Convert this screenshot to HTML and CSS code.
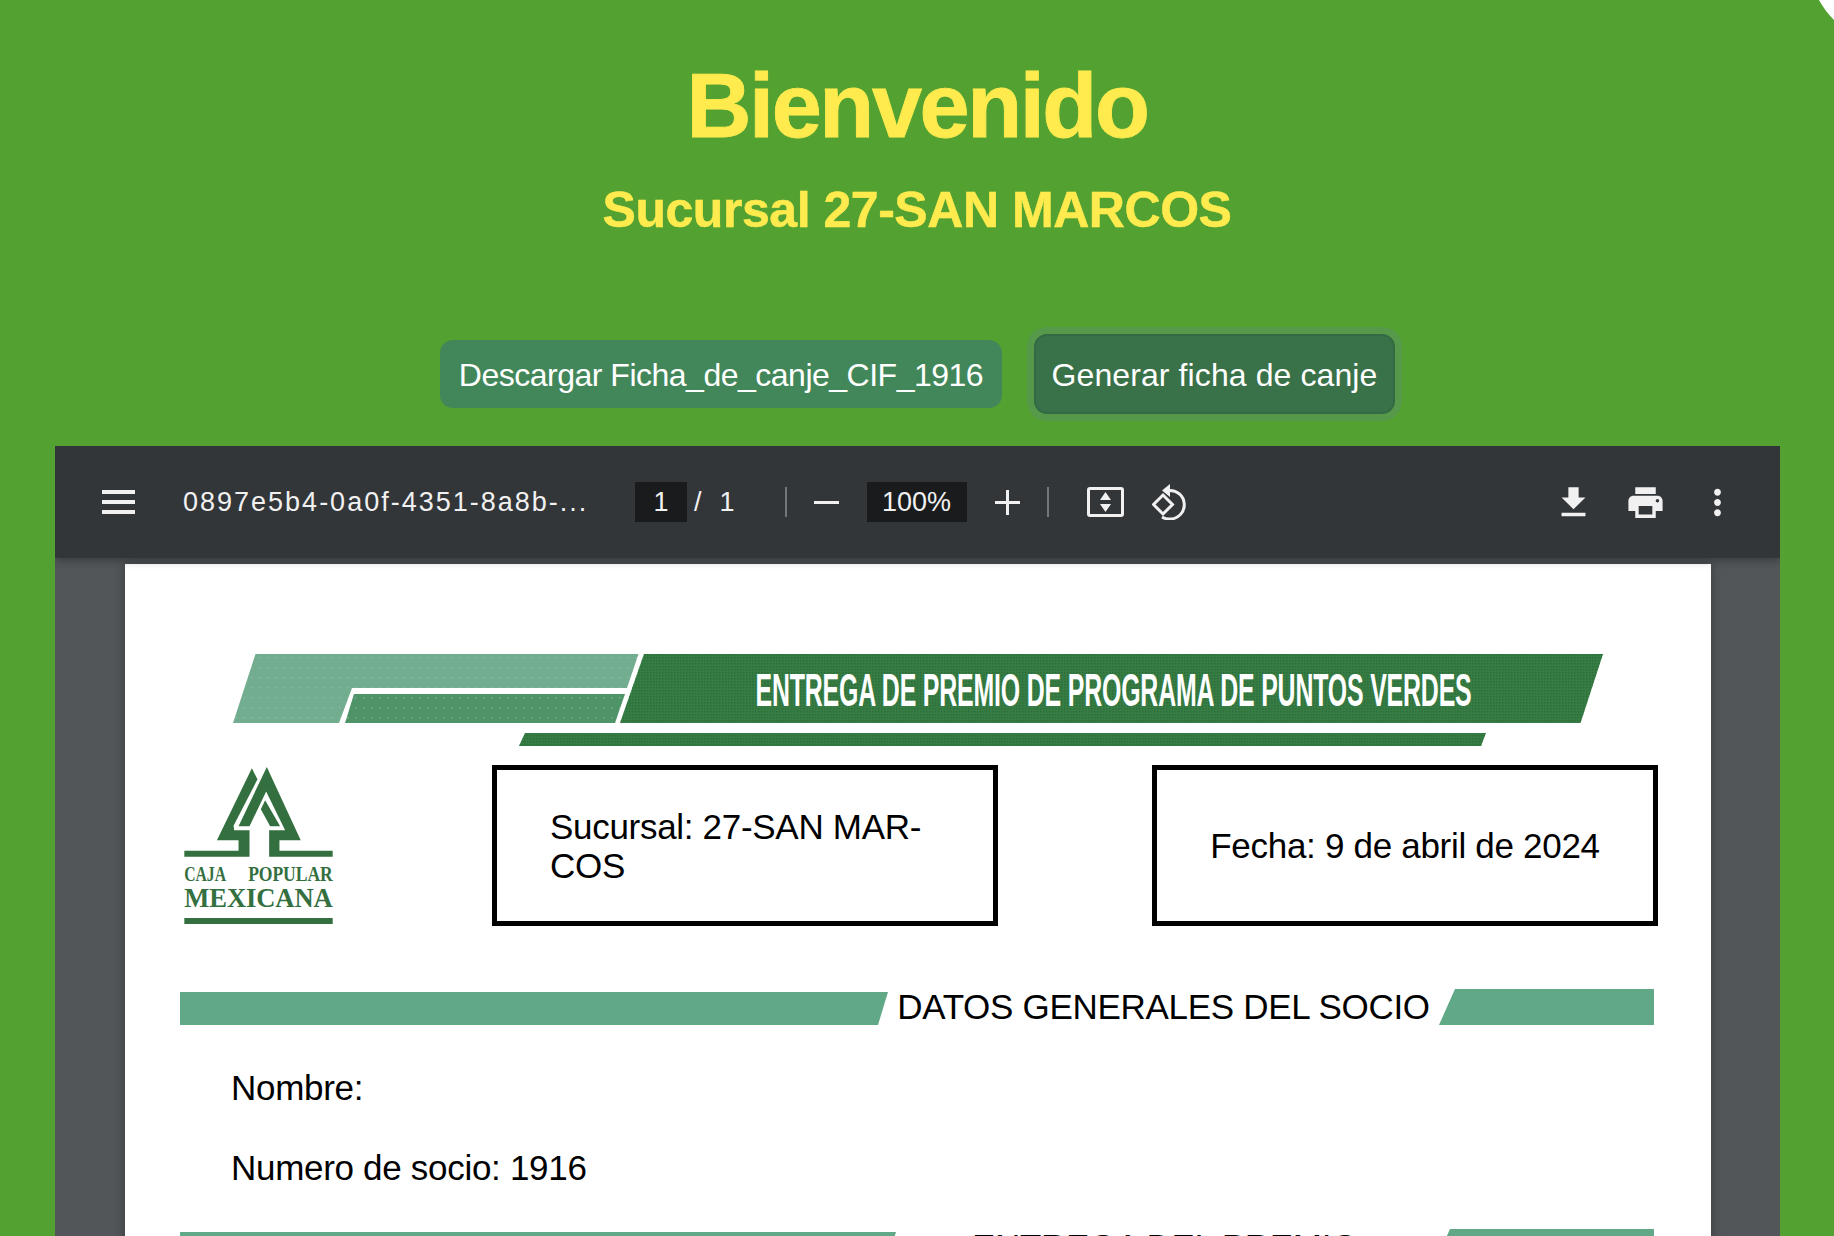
FILE: index.html
```html
<!DOCTYPE html>
<html lang="es">

<head>
  <meta charset="utf-8">
  <title>Bienvenido</title>
  <link rel="stylesheet" href="styles.css">
</head>

<body>
  <svg class="corner" viewBox="0 0 15 20"><path d="M0 0Q6 11 15 20V0Z" fill="#fff"/></svg>

  <header class="welcome">
    <h1>Bienvenido</h1>
    <h2>Sucursal 27-SAN MARCOS</h2>
  </header>

  <div class="actions">
    <button class="btn">Descargar Ficha_de_canje_CIF_1916</button>
    <button class="btn btn-focus">Generar ficha de canje</button>
  </div>

  <section class="viewer">
    <div class="toolbar">
      <svg class="icon menu-icon" viewBox="0 0 33 24"><path d="M0 0h33v4H0zM0 10h33v4H0zM0 20h33v4H0z"/></svg>
      <span class="doc-title">0897e5b4-0a0f-4351-8a8b-...</span>

      <span class="field page-field">1</span>
      <span class="slash">/</span>
      <span class="page-total">1</span>
      <span class="sep"></span>
      <svg class="icon zoom-out" viewBox="0 0 25 3"><path d="M0 0h25v3H0z"/></svg>
      <span class="field zoom-field">100%</span>
      <svg class="icon zoom-in" viewBox="0 0 25 25"><path d="M11 0h3v11h11v3H14v11h-3V14H0v-3h11z"/></svg>
      <span class="sep sep-right"></span>
      <svg class="icon fit-icon" viewBox="0 0 37 30">
        <path d="M3 0h31a3 3 0 0 1 3 3v24a3 3 0 0 1-3 3H3a3 3 0 0 1-3-3V3a3 3 0 0 1 3-3zm0 3v24h31V3z"/>
        <path d="M18.500 5l5.500 8H13zM18.500 25L13 17h11z"/>
      </svg>
      <svg class="rotate-icon" viewBox="0 0 34 36">
        <path d="M1.500 20.500L11 11l9.500 9.500L11 30z" fill="none" stroke="#f1f1f1" stroke-width="3"/>
        <path d="M17 6.500a14 14 0 0 1 2 28.500a14 14 0 0 1-9-2" fill="none" stroke="#f1f1f1" stroke-width="3"/>
        <path d="M18 0v13l-8-6.500z" fill="#f1f1f1"/>
      </svg>

      <div class="toolbar-right">
        <svg class="icon tool" viewBox="0 0 24 24"><path d="M19 9h-4V3H9v6H5l7 7 7-7zM5 18v2h14v-2H5z"/></svg>
        <svg class="icon tool" viewBox="0 0 24 24"><path d="M19 8H5c-1.660 0-3 1.340-3 3v6h4v4h12v-4h4v-6c0-1.660-1.340-3-3-3zm-3 11H8v-5h8v5zm3-7c-.55 0-1-.45-1-1s.45-1 1-1 1 .45 1 1-.45 1-1 1zm-1-9H6v4h12V3z"/></svg>
        <svg class="icon tool" viewBox="0 0 24 24"><path d="M12 8c1.100 0 2-.9 2-2s-.9-2-2-2-2 .9-2 2 .9 2 2 2zm0 2c-1.100 0-2 .9-2 2s.9 2 2 2 2-.9 2-2-.9-2-2-2zm0 6c-1.100 0-2 .9-2 2s.9 2 2 2 2-.9 2-2-.9-2-2-2z"/></svg>
      </div>
    </div>

    <article class="pdf-page">
      <svg class="banner" viewBox="0 0 1370 92">
        <defs>
          <pattern id="dots-light" width="8" height="10" patternUnits="userSpaceOnUse">
            <rect x="2" y="3" width="1.500" height="1.500" fill="#a3cdb3" opacity="0.45"/>
          </pattern>
          <pattern id="dots-dark" width="3" height="3" patternUnits="userSpaceOnUse">
            <rect width="1.500" height="1.500" fill="#2b6f38"/>
          </pattern>
        </defs>
        <path d="M22.500 0H405.500L394 34H119L106 69H0Z" fill="#72ad8f"/>
        <path d="M22.500 0H405.500L394 34H119L106 69H0Z" fill="url(#dots-light)"/>
        <path d="M121 40H392L382 69H112Z" fill="#4f9468"/>
        <path d="M121 40H392L382 69H112Z" fill="url(#dots-light)"/>
        <path d="M411 0H1370L1347.500 69H387Z" fill="#367c44"/>
        <path d="M411 0H1370L1347.500 69H387Z" fill="url(#dots-dark)"/>
        <path d="M292 79H1253L1248 92H286Z" fill="#367c44"/>
        <path d="M292 79H1253L1248 92H286Z" fill="url(#dots-dark)"/>
        <text x="522.500" y="52" class="banner-text" textLength="716" lengthAdjust="spacingAndGlyphs">ENTREGA DE PREMIO DE PROGRAMA DE PUNTOS VERDES</text>
      </svg>

      <div class="info-row">
        <svg class="logo" viewBox="42 48 446 472">
          <g fill="#34703f">
            <path d="M245 52L262 85L190 225L192 238H238V318H42V300H205V268H140Z"/>
            <path d="M290 48L392 268H328V300H488V318H297V238H345L288 122L238 226H205Z"/>
            <path d="M285 148L330 226H300L272 175Z"/>
            <path d="M42 502H488V520H42Z"/>
          </g>
          <text x="42" y="392" class="logo-small" textLength="125" lengthAdjust="spacingAndGlyphs">CAJA</text>
          <text x="234" y="392" class="logo-small" textLength="254" lengthAdjust="spacingAndGlyphs">POPULAR</text>
          <text x="42" y="468" class="logo-big" textLength="446" lengthAdjust="spacingAndGlyphs">MEXICANA</text>
        </svg>
        <div class="info-box box-branch">Sucursal: 27-SAN MAR-<br>COS</div>
        <div class="info-box box-date">Fecha: 9 de abril de 2024</div>
      </div>

      <div class="section-head head-socio">
        <span class="bar bar-left"></span>
        <span class="head-text">DATOS GENERALES DEL SOCIO</span>
        <span class="bar bar-right"></span>
      </div>

      <p class="data-line line-name">Nombre:</p>
      <p class="data-line">Numero de socio: 1916</p>

      <div class="section-head head-premio">
        <span class="bar bar-left"></span>
        <span class="head-text">ENTREGA DEL PREMIO</span>
        <span class="bar bar-right"></span>
      </div>
    </article>
  </section>
</body>

</html>
```

FILE: styles.css
```css
* {
  box-sizing: border-box;
}
html {
  background-color: #fff;
}
body {
  margin: 0;
  height: 1236px;
  overflow: hidden;
  background-color: #53a130;
  font-family: "Liberation Sans", Arial, sans-serif;
}
.corner {
  position: absolute;
  top: 0;
  right: 0;
  width: 15px;
  height: 20px;
}
.welcome {
  text-align: center;
  color: #ffeb4e;
  padding-top: 56px;
}
h1 {
  margin: 0;
  font-size: 90px;
  line-height: 100px;
  letter-spacing: -2.4px;
  -webkit-text-stroke: 0.8px #ffeb4e;
}
h2 {
  margin: 25px 0 0;
  font-size: 50px;
  line-height: 58px;
  letter-spacing: -0.46px;
  -webkit-text-stroke: 0.5px #ffeb4e;
}

/* botones */
.actions {
  display: flex;
  justify-content: center;
  align-items: center;
  gap: 32px;
  margin-top: 95px;
  margin-left: 1px;
}
.btn {
  height: 68px;
  width: 562px;
  padding: 2px 0 0;
  border: none;
  border-radius: 13px;
  background-color: #42875a;
  color: #fff;
  font-family: inherit;
  font-size: 32px;
  letter-spacing: -0.5px;
}
.btn-focus {
  height: 80px;
  width: 361px;
  background-color: #397149;
  border: 2px solid #346a43;
  box-shadow: 0 0 0 7px #56994b;
  letter-spacing: 0.1px;
}

/* visor pdf */
.viewer {
  margin: 32px 54px 0 55px;
  height: 790px;
  overflow: hidden;
  background-color: #525659;
}
.toolbar {
  position: relative;
  z-index: 2;
  display: flex;
  align-items: center;
  height: 112px;
  padding-left: 47px;
  background-color: #323639;
  color: #f1f1f1;
  box-shadow: 0 3px 8px rgba(0, 0, 0, 0.28);
  font-size: 27px;
}
.icon {
  fill: #f1f1f1;
  flex: none;
}
.menu-icon {
  width: 33px;
  height: 24px;
}
.doc-title {
  width: 405px;
  margin-left: 48px;
  white-space: nowrap;
  letter-spacing: 2px;
}
.field {
  display: flex;
  align-items: center;
  justify-content: center;
  height: 40px;
  background-color: #191b1c;
}
.page-field {
  width: 52px;
  margin-left: 47px;
}
.slash {
  margin-left: 7px;
}
.page-total {
  margin-left: 18px;
}
.sep {
  width: 2px;
  height: 30px;
  margin-left: 50px;
  background-color: #74777a;
}
.sep-right {
  margin-left: 27px;
}
.zoom-out {
  width: 25px;
  height: 3px;
  margin-left: 27px;
}
.zoom-field {
  width: 100px;
  margin-left: 28px;
}
.zoom-in {
  width: 25px;
  height: 25px;
  margin-left: 28px;
}
.fit-icon {
  width: 37px;
  height: 30px;
  margin-left: 38px;
}
.rotate-icon {
  width: 34px;
  height: 36px;
  margin-left: 28px;
  flex: none;
}
.toolbar-right {
  display: flex;
  align-items: center;
  gap: 31px;
  margin-left: auto;
  margin-right: 42px;
}
.tool {
  width: 41px;
  height: 41px;
}

/* hoja */
.pdf-page {
  width: 1586px;
  height: 800px;
  margin: 6px 0 0 70px;
  padding-top: 90px;
  background-color: #fff;
  box-shadow: 0 0 10px rgba(0, 0, 0, 0.3);
  color: #000;
  font-size: 35px;
  letter-spacing: -0.3px;
}
.banner {
  display: block;
  width: 1370px;
  height: 92px;
  margin-left: 108px;
  overflow: visible;
}
.banner-text {
  fill: #fff;
  font-size: 46px;
  font-weight: bold;
}
.info-row {
  display: flex;
  align-items: flex-end;
  margin-top: 19px;
  padding-left: 59px;
}
.logo {
  width: 149px;
  height: 157px;
  flex: none;
  margin-bottom: 2px;
  overflow: visible;
}
.logo-small {
  fill: #34703f;
  font-family: "Liberation Serif", serif;
  font-size: 60px;
  font-weight: bold;
}
.logo-big {
  fill: #34703f;
  font-family: "Liberation Serif", serif;
  font-size: 80px;
  font-weight: bold;
}
.info-box {
  display: flex;
  align-items: center;
  width: 506px;
  height: 161px;
  border: 5px solid #000;
  line-height: 39px;
}
.box-branch {
  margin-left: 159px;
  padding-left: 53px;
}
.box-date {
  margin-left: 154px;
  justify-content: center;
}
.section-head {
  display: flex;
  align-items: flex-end;
  width: 1474px;
  height: 36px;
  margin-top: 63px;
  margin-left: 55px;
}
.bar {
  display: block;
  flex: none;
  background-color: #60a886;
}
.bar-left {
  height: 33px;
  clip-path: polygon(0 0, 100% 0, calc(100% - 10px) 100%, 0 100%);
}
.bar-right {
  height: 36px;
  clip-path: polygon(16px 0, 100% 0, 100% 100%, 0 100%);
}
.head-text {
  flex: 1;
  text-align: center;
  line-height: 36px;
  white-space: nowrap;
}
.head-socio .bar-left {
  width: 708px;
}
.head-socio .bar-right {
  width: 215px;
}
.head-premio .bar-left {
  width: 716px;
}
.head-premio .bar-right {
  width: 220px;
}
.data-line {
  margin: 40px 0 0 106px;
  line-height: 40px;
}
.line-name {
  margin-top: 43px;
}
.head-premio {
  margin-top: 41px;
}
```
